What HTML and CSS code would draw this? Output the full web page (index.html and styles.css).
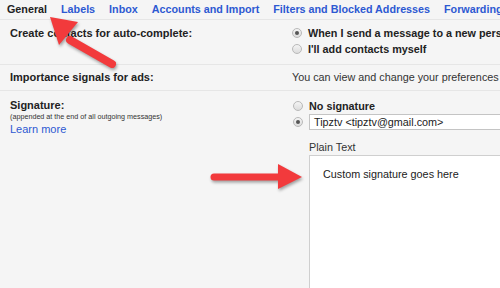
FILE: index.html
```html
<!DOCTYPE html>
<html>
<head>
<meta charset="utf-8">
<link rel="stylesheet" href="styles.css">
</head>
<body>
<div class="page">
  <nav class="tabs">
    <span class="tab active">General</span>
    <span class="tab">Labels</span>
    <span class="tab">Inbox</span>
    <span class="tab">Accounts and Import</span>
    <span class="tab">Filters and Blocked Addresses</span>
    <span class="tab">Forwarding and POP/IMAP</span>
  </nav>

  <div class="row row-contacts">
    <div class="label">Create contacts for auto-complete:</div>
    <div class="value">
      <div class="opt"><span class="radio checked"></span><span class="strong">When I send a message to a new person, add them to Other Contacts</span></div>
      <div class="opt"><span class="radio"></span><span class="strong">I'll add contacts myself</span></div>
    </div>
  </div>

  <div class="row row-ads">
    <div class="label">Importance signals for ads:</div>
    <div class="value plain">You can view and change your preferences <span class="visited">here</span></div>
  </div>

  <div class="row row-sig">
    <div class="label">
      <div>Signature:</div>
      <div class="note">(appended at the end of all outgoing messages)</div>
      <div class="link">Learn more</div>
    </div>
    <div class="value sig">
      <div class="opt"><span class="radio"></span><span class="strong">No signature</span></div>
      <div class="opt"><span class="radio checked"></span><span class="select">Tipztv &lt;tipztv@gmail.com&gt;</span></div>
      <div class="mode">Plain Text</div>
      <div class="editor">Custom signature goes here</div>
    </div>
  </div>

  <svg class="arrow arrow-up" width="90" height="80" viewBox="0 0 90 80">
    <line x1="69" y1="51" x2="27" y2="27" stroke="#f23a3c" stroke-width="8" stroke-linecap="round"/>
    <polygon points="7,4 35,9 16,32" fill="#f23a3c"/>
  </svg>
  <svg class="arrow arrow-right" width="110" height="40" viewBox="0 0 110 40">
    <line x1="8" y1="21" x2="74" y2="21" stroke="#f23a3c" stroke-width="7" stroke-linecap="round"/>
    <polygon points="72,8 96,21 72,33" fill="#f23a3c"/>
  </svg>
</div>
</body>
</html>
```

FILE: styles.css
```css
html, body {
  margin: 0;
  padding: 0;
  width: 500px;
  height: 288px;
  overflow: hidden;
  background: #f5f5f5;
}

.page {
  position: relative;
  width: 500px;
  height: 288px;
  overflow: hidden;
  font-family: "Liberation Sans", Arial, sans-serif;
  font-size: 10.8px;
  color: #222;
}

.tabs {
  display: flex;
  gap: 14px;
  height: 19px;
  padding-left: 7px;
  border-bottom: 1px solid #e6e6e6;
  white-space: nowrap;
  align-items: center;
}

.tab {
  font-weight: bold;
  color: #2d59d2;
  font-size: 10.75px;
  line-height: 13px;
}

.tab.active {
  color: #222;
}

.row {
  display: grid;
  grid-template-columns: 292px 1fr;
  border-bottom: 1px solid #e6e6e6;
  white-space: nowrap;
}

.label {
  padding-left: 10px;
  font-weight: bold;
  font-size: 11px;
  line-height: 16px;
}

.value {
  line-height: 16px;
}

.row-contacts {
  padding: 5px 0 7px;
  height: 32px;
}

.row-ads {
  padding: 4px 0 5px;
  height: 16px;
}

.row-sig {
  padding-top: 6px;
  border-bottom: none;
}

.opt {
  display: flex;
  align-items: center;
  gap: 6px;
  height: 16px;
}

.strong {
  font-weight: bold;
}

.radio {
  box-sizing: border-box;
  width: 10px;
  height: 10px;
  border-radius: 50%;
  border: 1px solid #b9b9b9;
  background: linear-gradient(#f4f4f4, #dcdcdc);
  flex: none;
  display: flex;
  align-items: center;
  justify-content: center;
}

.radio.checked::after {
  content: "";
  width: 4px;
  height: 4px;
  border-radius: 50%;
  background: #555;
}

.value.plain {
  color: #333;
}

.visited {
  color: #6b3d9e;
}

.note {
  font-weight: normal;
  font-size: 7.2px;
  line-height: 8px;
  color: #333;
}

.link {
  font-weight: normal;
  color: #2d59d2;
  font-size: 11px;
  line-height: 16px;
}

.sig .opt {
  padding-left: 1px;
}

.sig .opt:first-child {
  margin-top: 1px;
}

.select {
  box-sizing: border-box;
  height: 16px;
  width: 220px;
  border: 1px solid #c4c4c4;
  background: #fff;
  padding-left: 4px;
  line-height: 14px;
  color: #222;
}

.mode {
  margin-top: 9px;
  padding-left: 17px;
  line-height: 16px;
  color: #333;
}

.editor {
  box-sizing: border-box;
  margin-left: 17px;
  width: 220px;
  height: 140px;
  background: #fff;
  border: 1px solid #cfcfcf;
  padding: 11px 0 0 13px;
  line-height: 14px;
  color: #222;
}

.arrow {
  position: absolute;
  overflow: visible;
  filter: drop-shadow(1px 2px 1.5px rgba(0, 0, 0, 0.35));
}

.arrow-up {
  left: 43px;
  top: 13px;
}

.arrow-right {
  left: 206px;
  top: 156px;
}
```
